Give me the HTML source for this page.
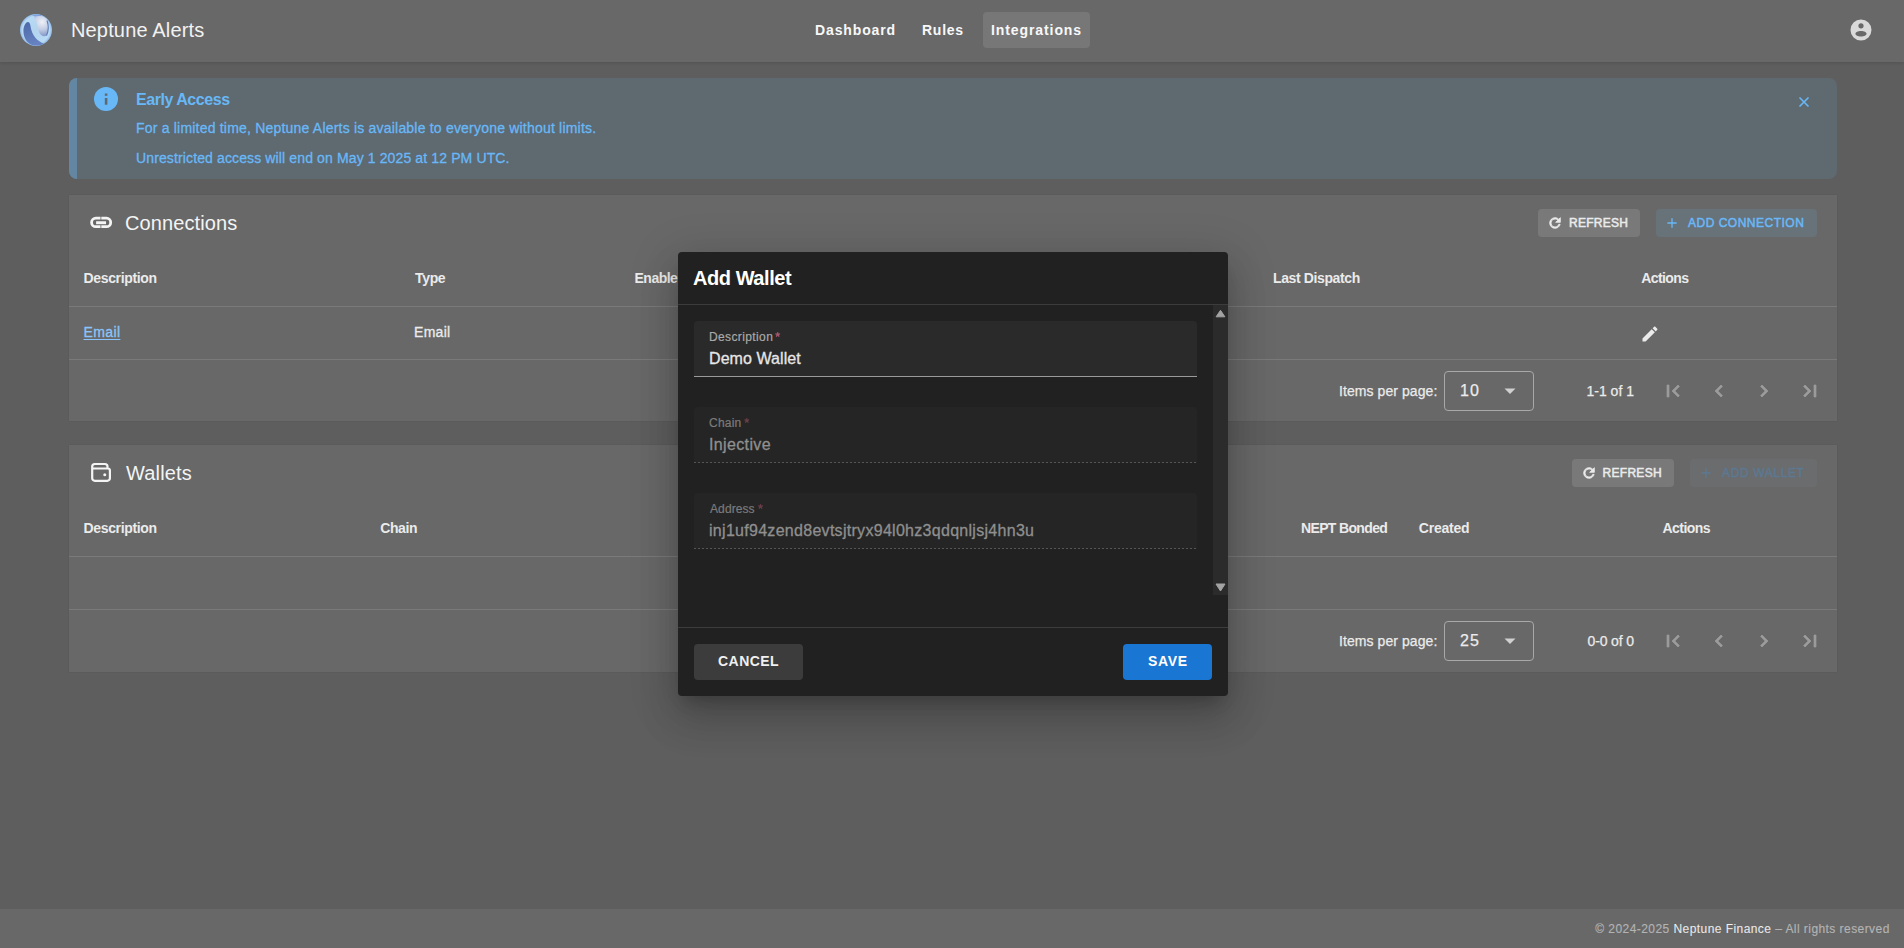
<!DOCTYPE html>
<html><head><meta charset="utf-8"><title>Neptune Alerts</title>
<style>
html,body{margin:0;padding:0;}
body{width:1904px;height:948px;overflow:hidden;position:relative;background:#5e5e5e;font-family:"Liberation Sans", sans-serif;}
</style></head><body>
<div style="position:absolute;left:0px;top:0px;width:1904px;height:62px;background:#686868;box-shadow:0 1px 3px rgba(0,0,0,.08),0 2px 2px rgba(0,0,0,.03);"></div>
<svg style="position:absolute;left:20px;top:14px" width="32" height="32" viewBox="0 0 32 32">
<defs>
<radialGradient id="hl" cx="22" cy="8" r="15" gradientUnits="userSpaceOnUse"><stop offset="0" stop-color="#eef0f6"/><stop offset="0.5" stop-color="#c3cde4"/><stop offset="1" stop-color="#7f92c4"/></radialGradient>
<linearGradient id="dk" x1="0" y1="0" x2="0.3" y2="1"><stop offset="0" stop-color="#4d68a8"/><stop offset="1" stop-color="#6682c0"/></linearGradient>
<radialGradient id="sp" cx="16" cy="16" r="16" gradientUnits="userSpaceOnUse"><stop offset="0" stop-color="#b3d3ef"/><stop offset="0.85" stop-color="#b8daf4"/><stop offset="1" stop-color="#8fb8e6"/></radialGradient>
</defs>
<circle cx="16" cy="16" r="16" fill="url(#sp)"/>
<path d="M12 1.2C15 0.3 19 0.3 22 1.5L17 3.5Z" fill="#7fa2dc"/>
<path d="M6 9C8 7 10 8 10.5 12C11 16.5 13 21 16 24.5C18.5 27 21 28.5 24 29.8C20 32 14 32.2 10 30C5 27 3 21 3.5 15C4 12 5 10 6 9Z" fill="url(#dk)"/>
<path d="M14 3C19 1.2 24.5 2 27.5 6C28.8 10 28.8 17 26.5 21.5C24 23 21 22 19.5 19C18 15.5 17.5 9 14 3Z" fill="url(#hl)"/>
<path d="M27 6.5C28.6 11 28.6 17 26.5 21.5" fill="none" stroke="#5b7bb8" stroke-width="1.1"/>
</svg>
<div style="position:absolute;left:71.00px;top:20.00px;font-size:20px;line-height:20px;font-weight:400;letter-spacing:0.154px;color:#f2f2f2;white-space:nowrap;">Neptune Alerts</div>
<div style="position:absolute;left:983px;top:12px;width:107px;height:36px;background:#777777;border-radius:4px;"></div>
<div style="position:absolute;left:815.00px;top:23.00px;font-size:14px;line-height:14px;font-weight:700;letter-spacing:0.875px;color:#f8f8f8;white-space:nowrap;">Dashboard</div>
<div style="position:absolute;left:922.00px;top:23.00px;font-size:14px;line-height:14px;font-weight:700;letter-spacing:0.750px;color:#f8f8f8;white-space:nowrap;">Rules</div>
<div style="position:absolute;left:991.00px;top:23.00px;font-size:14px;line-height:14px;font-weight:700;letter-spacing:0.909px;color:#f8f8f8;white-space:nowrap;">Integrations</div>
<svg style="position:absolute;left:1849px;top:18px" width="24" height="24" viewBox="0 0 24 24">
<path fill="#d9d9d9" fill-rule="evenodd" d="M12 1.5A10.5 10.5 0 1 1 12 22.5A10.5 10.5 0 1 1 12 1.5Z M12 5.2A2.6 2.6 0 1 0 12 10.4A2.6 2.6 0 1 0 12 5.2Z M12 13C8.9 13 6.4 14.2 6.4 15.7C6.4 17.2 8.9 18.4 12 18.4C15.1 18.4 17.6 17.2 17.6 15.7C17.6 14.2 15.1 13 12 13Z"/>
</svg>
<div style="position:absolute;left:69px;top:78px;width:1768px;height:101px;background:rgb(95,105,112);border-radius:8px;"></div>
<div style="position:absolute;left:69px;top:78px;width:8px;height:101px;background:rgb(99,135,163);border-radius:8px 0 0 8px;"></div>
<svg style="position:absolute;left:94.2px;top:87.3px" width="24" height="24" viewBox="0 0 24 24">
<circle cx="12" cy="12" r="12" fill="rgb(104,184,247)"/>
<rect x="10.8" y="11" width="2.6" height="6.7" fill="rgb(95,105,112)"/>
<rect x="10.8" y="6.5" width="2.6" height="2.3" fill="rgb(95,105,112)"/>
</svg>
<div style="position:absolute;left:136.00px;top:92.00px;font-size:16px;line-height:16px;font-weight:700;letter-spacing:-0.455px;color:rgb(104,184,247);white-space:nowrap;">Early Access</div>
<div style="position:absolute;left:136.00px;top:121.00px;font-size:14px;line-height:14px;font-weight:400;letter-spacing:0.203px;color:rgb(104,184,247);white-space:nowrap;-webkit-text-stroke:0.3px rgb(104,184,247);">For a limited time, Neptune Alerts is available to everyone without limits.</div>
<div style="position:absolute;left:136.00px;top:151.00px;font-size:14px;line-height:14px;font-weight:400;letter-spacing:0.127px;color:rgb(104,184,247);white-space:nowrap;-webkit-text-stroke:0.3px rgb(104,184,247);">Unrestricted access will end on May 1 2025 at 12 PM UTC.</div>
<svg style="position:absolute;left:1798px;top:96px" width="12" height="12" viewBox="0 0 12 12">
<path d="M1.5 1.5L10.5 10.5M10.5 1.5L1.5 10.5" stroke="rgb(104,184,247)" stroke-width="1.6"/>
</svg>
<div style="position:absolute;left:69px;top:195px;width:1768px;height:226px;background:#686868;box-shadow:0 0 1px rgba(0,0,0,.2);"></div>
<svg style="position:absolute;left:89px;top:211px" width="24" height="24" viewBox="0 0 24 24">
<path fill="none" stroke="#f4f4f4" stroke-width="2.8" d="M11.5 7.15H6.85A4.25 4.25 0 0 0 6.85 15.65H11.5 M12.3 7.15H17.45A4.25 4.25 0 0 1 17.45 15.65H12.3"/>
<rect x="7.1" y="10.25" width="9.95" height="2.95" fill="#f4f4f4"/>
</svg>
<div style="position:absolute;left:125.00px;top:213.00px;font-size:20px;line-height:20px;font-weight:400;letter-spacing:0.100px;color:#f4f4f4;white-space:nowrap;">Connections</div>
<div style="position:absolute;left:1538px;top:209px;width:102px;height:28px;background:#797979;border-radius:4px;"></div>
<svg style="position:absolute;left:1546.5px;top:215px" width="16" height="16" viewBox="0 0 24 24"><path fill="#ebebeb" stroke="#ebebeb" stroke-width="1.2" d="M17.65,6.35C16.2,4.9 14.21,4 12,4A8,8 0 0,0 4,12A8,8 0 0,0 12,20C15.73,20 18.84,17.45 19.73,14H17.65C16.83,16.33 14.61,18 12,18A6,6 0 0,1 6,12A6,6 0 0,1 12,6C13.66,6 15.14,6.69 16.22,7.78L13,11H20V4L17.65,6.35Z"/></svg>
<div style="position:absolute;left:1569.00px;top:217.00px;font-size:12px;line-height:12px;font-weight:400;letter-spacing:0.250px;color:#ebebeb;white-space:nowrap;-webkit-text-stroke:0.5px #ebebeb;">REFRESH</div>
<div style="position:absolute;left:1656px;top:209px;width:161px;height:28px;background:rgb(104,114,121);border-radius:4px;"></div>
<svg style="position:absolute;left:1664px;top:215px" width="16" height="16" viewBox="0 0 24 24"><path fill="rgb(104,184,247)" d="M19,13H13V19H11V13H5V11H11V5H13V11H19V13Z"/></svg>
<div style="position:absolute;left:1688.00px;top:217.00px;font-size:12px;line-height:12px;font-weight:400;letter-spacing:0.500px;color:rgb(104,184,247);white-space:nowrap;-webkit-text-stroke:0.5px rgb(104,184,247);">ADD CONNECTION</div>
<div style="position:absolute;left:83.50px;top:271.00px;font-size:14px;line-height:14px;font-weight:700;letter-spacing:-0.350px;color:#ebebeb;white-space:nowrap;">Description</div>
<div style="position:absolute;left:415.00px;top:271.00px;font-size:14px;line-height:14px;font-weight:700;letter-spacing:-0.333px;color:#ebebeb;white-space:nowrap;">Type</div>
<div style="position:absolute;left:1273.00px;top:271.00px;font-size:14px;line-height:14px;font-weight:700;letter-spacing:-0.383px;color:#ebebeb;white-space:nowrap;">Last Dispatch</div>
<div style="position:absolute;left:1641.30px;top:271.00px;font-size:14px;line-height:14px;font-weight:700;letter-spacing:-0.600px;color:#ebebeb;white-space:nowrap;">Actions</div>
<div style="position:absolute;left:634.50px;top:271.00px;font-size:14px;line-height:14px;font-weight:700;letter-spacing:-0.500px;color:#ebebeb;white-space:nowrap;">Enable</div>
<div style="position:absolute;left:69px;top:306px;width:1768px;height:1px;background:#7a7a7a;"></div>
<div style="position:absolute;left:83.50px;top:325.00px;font-size:14px;line-height:14px;font-weight:400;letter-spacing:0.375px;color:rgb(138,196,250);white-space:nowrap;text-decoration:underline;text-underline-offset:2px;text-decoration-thickness:1.2px;-webkit-text-stroke:0.3px rgb(138,196,250);">Email</div>
<div style="position:absolute;left:414.00px;top:325.00px;font-size:14px;line-height:14px;font-weight:400;letter-spacing:0.300px;color:#ebebeb;white-space:nowrap;-webkit-text-stroke:0.3px #ebebeb;">Email</div>
<svg style="position:absolute;left:1640px;top:323.5px" width="20" height="20" viewBox="0 0 24 24"><path fill="#ebebeb" d="M20.71,7.04C21.1,6.65 21.1,6 20.71,5.63L18.37,3.29C18,2.9 17.35,2.9 16.96,3.29L15.12,5.12L18.87,8.87M3,17.25V21H6.75L17.81,9.93L14.06,6.18L3,17.25Z"/></svg>
<div style="position:absolute;left:69px;top:359px;width:1768px;height:1px;background:#7a7a7a;"></div>
<div style="position:absolute;left:1339.00px;top:384.00px;font-size:14px;line-height:14px;font-weight:400;letter-spacing:0.071px;color:#ebebeb;white-space:nowrap;-webkit-text-stroke:0.25px #ebebeb;">Items per page:</div>
<div style="position:absolute;left:1444px;top:371px;width:88px;height:38px;border:1px solid #a8a8a8;border-radius:4px;"></div>
<div style="position:absolute;left:1460.00px;top:383.00px;font-size:16px;line-height:16px;font-weight:400;letter-spacing:1.000px;color:#ebebeb;white-space:nowrap;-webkit-text-stroke:0.25px #ebebeb;">10</div>
<svg style="position:absolute;left:1504px;top:388px" width="12" height="7" viewBox="0 0 12 7"><path d="M0.5 0.5H11.5L6 6Z" fill="#d0d0d0"/></svg>
<div style="position:absolute;left:1586.50px;top:384.00px;font-size:14px;line-height:14px;font-weight:400;letter-spacing:0.000px;color:#ebebeb;white-space:nowrap;-webkit-text-stroke:0.25px #ebebeb;">1-1 of 1</div>
<svg style="position:absolute;left:1661px;top:379px" width="24" height="24" viewBox="0 0 24 24"><path fill="#9c9c9c" stroke="#9c9c9c" stroke-width="0.7" d="M18.41,16.59L13.82,12L18.41,7.41L17,6L11,12L17,18L18.41,16.59M6,6H8V18H6V6Z"/></svg>
<svg style="position:absolute;left:1707px;top:379px" width="24" height="24" viewBox="0 0 24 24"><path fill="#9c9c9c" stroke="#9c9c9c" stroke-width="0.7" d="M15.41,16.58L10.83,12L15.41,7.41L14,6L8,12L14,18L15.41,16.58Z"/></svg>
<svg style="position:absolute;left:1752px;top:379px" width="24" height="24" viewBox="0 0 24 24"><path fill="#9c9c9c" stroke="#9c9c9c" stroke-width="0.7" d="M8.59,16.58L13.17,12L8.59,7.41L10,6L16,12L10,18L8.59,16.58Z"/></svg>
<svg style="position:absolute;left:1798px;top:379px" width="24" height="24" viewBox="0 0 24 24"><path fill="#9c9c9c" stroke="#9c9c9c" stroke-width="0.7" d="M5.59,7.41L10.18,12L5.59,16.59L7,18L13,12L7,6L5.59,7.41M16,6H18V18H16V6Z"/></svg>
<div style="position:absolute;left:69px;top:445px;width:1768px;height:227px;background:#686868;box-shadow:0 0 1px rgba(0,0,0,.2);"></div>
<svg style="position:absolute;left:89px;top:461px" width="24" height="24" viewBox="0 0 24 24">
<path fill="none" stroke="#f4f4f4" stroke-width="2.2" stroke-linejoin="round" d="M18.5 7.5V5.6A2.6 2.6 0 0 0 15.9 3H5.8A2.6 2.6 0 0 0 3.2 5.6V17.2A2.6 2.6 0 0 0 5.8 19.8H18.3A2.6 2.6 0 0 0 20.9 17.2V9.5A2 2 0 0 0 18.9 7.5H3.2"/>
<circle cx="15.75" cy="13.75" r="1.5" fill="#f4f4f4"/>
</svg>
<div style="position:absolute;left:126.00px;top:463.00px;font-size:20px;line-height:20px;font-weight:400;letter-spacing:0.167px;color:#f4f4f4;white-space:nowrap;">Wallets</div>
<div style="position:absolute;left:1572px;top:459px;width:102px;height:28px;background:#797979;border-radius:4px;"></div>
<svg style="position:absolute;left:1580.5px;top:465px" width="16" height="16" viewBox="0 0 24 24"><path fill="#ebebeb" stroke="#ebebeb" stroke-width="1.2" d="M17.65,6.35C16.2,4.9 14.21,4 12,4A8,8 0 0,0 4,12A8,8 0 0,0 12,20C15.73,20 18.84,17.45 19.73,14H17.65C16.83,16.33 14.61,18 12,18A6,6 0 0,1 6,12A6,6 0 0,1 12,6C13.66,6 15.14,6.69 16.22,7.78L13,11H20V4L17.65,6.35Z"/></svg>
<div style="position:absolute;left:1602.50px;top:467.00px;font-size:12px;line-height:12px;font-weight:400;letter-spacing:0.300px;color:#ebebeb;white-space:nowrap;-webkit-text-stroke:0.5px #ebebeb;">REFRESH</div>
<div style="position:absolute;left:1690px;top:459px;width:127px;height:28px;background:#6a6c6e;border-radius:4px;"></div>
<svg style="position:absolute;left:1698px;top:465px" width="16" height="16" viewBox="0 0 24 24"><path fill="#5d7891" d="M19,13H13V19H11V13H5V11H11V5H13V11H19V13Z"/></svg>
<div style="position:absolute;left:1722.00px;top:467.00px;font-size:12px;line-height:12px;font-weight:400;letter-spacing:0.633px;color:#5d7891;white-space:nowrap;-webkit-text-stroke:0.5px #5d7891;">ADD WALLET</div>
<div style="position:absolute;left:83.50px;top:521.00px;font-size:14px;line-height:14px;font-weight:700;letter-spacing:-0.350px;color:#ebebeb;white-space:nowrap;">Description</div>
<div style="position:absolute;left:380.20px;top:521.00px;font-size:14px;line-height:14px;font-weight:700;letter-spacing:-0.400px;color:#ebebeb;white-space:nowrap;">Chain</div>
<div style="position:absolute;left:1301.00px;top:521.00px;font-size:14px;line-height:14px;font-weight:700;letter-spacing:-0.650px;color:#ebebeb;white-space:nowrap;">NEPT Bonded</div>
<div style="position:absolute;left:1418.80px;top:521.00px;font-size:14px;line-height:14px;font-weight:700;letter-spacing:-0.233px;color:#ebebeb;white-space:nowrap;">Created</div>
<div style="position:absolute;left:1662.50px;top:521.00px;font-size:14px;line-height:14px;font-weight:700;letter-spacing:-0.533px;color:#ebebeb;white-space:nowrap;">Actions</div>
<div style="position:absolute;left:69px;top:556px;width:1768px;height:1px;background:#7a7a7a;"></div>
<div style="position:absolute;left:69px;top:609px;width:1768px;height:1px;background:#7a7a7a;"></div>
<div style="position:absolute;left:1339.00px;top:634.00px;font-size:14px;line-height:14px;font-weight:400;letter-spacing:0.071px;color:#ebebeb;white-space:nowrap;-webkit-text-stroke:0.25px #ebebeb;">Items per page:</div>
<div style="position:absolute;left:1444px;top:621px;width:88px;height:38px;border:1px solid #a8a8a8;border-radius:4px;"></div>
<div style="position:absolute;left:1460.00px;top:633.00px;font-size:16px;line-height:16px;font-weight:400;letter-spacing:1.000px;color:#ebebeb;white-space:nowrap;-webkit-text-stroke:0.25px #ebebeb;">25</div>
<svg style="position:absolute;left:1504px;top:638px" width="12" height="7" viewBox="0 0 12 7"><path d="M0.5 0.5H11.5L6 6Z" fill="#d0d0d0"/></svg>
<div style="position:absolute;left:1587.50px;top:634.00px;font-size:14px;line-height:14px;font-weight:400;letter-spacing:-0.143px;color:#ebebeb;white-space:nowrap;-webkit-text-stroke:0.25px #ebebeb;">0-0 of 0</div>
<svg style="position:absolute;left:1661px;top:629px" width="24" height="24" viewBox="0 0 24 24"><path fill="#9c9c9c" stroke="#9c9c9c" stroke-width="0.7" d="M18.41,16.59L13.82,12L18.41,7.41L17,6L11,12L17,18L18.41,16.59M6,6H8V18H6V6Z"/></svg>
<svg style="position:absolute;left:1707px;top:629px" width="24" height="24" viewBox="0 0 24 24"><path fill="#9c9c9c" stroke="#9c9c9c" stroke-width="0.7" d="M15.41,16.58L10.83,12L15.41,7.41L14,6L8,12L14,18L15.41,16.58Z"/></svg>
<svg style="position:absolute;left:1752px;top:629px" width="24" height="24" viewBox="0 0 24 24"><path fill="#9c9c9c" stroke="#9c9c9c" stroke-width="0.7" d="M8.59,16.58L13.17,12L8.59,7.41L10,6L16,12L10,18L8.59,16.58Z"/></svg>
<svg style="position:absolute;left:1798px;top:629px" width="24" height="24" viewBox="0 0 24 24"><path fill="#9c9c9c" stroke="#9c9c9c" stroke-width="0.7" d="M5.59,7.41L10.18,12L5.59,16.59L7,18L13,12L7,6L5.59,7.41M16,6H18V18H16V6Z"/></svg>
<div style="position:absolute;left:0px;top:909px;width:1904px;height:39px;background:#686868;"></div>
<div style="position:absolute;left:1595.30px;top:923.00px;font-size:12px;line-height:12px;font-weight:400;letter-spacing:0.438px;color:#b3b3b3;white-space:nowrap;-webkit-text-stroke:0.15px #b3b3b3;">© 2024-2025 <span style="color:#f4f4f4">Neptune Finance</span> – All rights reserved</div>
<div style="position:absolute;left:678px;top:252px;width:550px;height:444px;background:#212121;border-radius:4px;box-shadow:0 11px 15px -7px rgba(0,0,0,.2),0 24px 38px 3px rgba(0,0,0,.14),0 9px 46px 8px rgba(0,0,0,.12);"></div>
<div style="position:absolute;left:693.00px;top:268.00px;font-size:20px;line-height:20px;font-weight:700;letter-spacing:-0.444px;color:#ffffff;white-space:nowrap;">Add Wallet</div>
<div style="position:absolute;left:678px;top:304px;width:550px;height:1px;background:#3c3c3c;"></div>
<div style="position:absolute;left:1213px;top:305px;width:15px;height:290px;background:#2b2b2b;"></div>
<svg style="position:absolute;left:1215px;top:308.6px" width="11" height="9" viewBox="0 0 11 9"><path d="M5.5 1.3L9.9 7.8H1.1Z" fill="#a3a3a3" stroke="#a3a3a3" stroke-width="1" stroke-linejoin="round"/></svg>
<svg style="position:absolute;left:1215px;top:583px" width="11" height="9" viewBox="0 0 11 9"><path d="M1 1H10L5.5 8Z" fill="#a3a3a3" stroke="#a3a3a3" stroke-width="1" stroke-linejoin="round"/></svg>
<div style="position:absolute;left:694px;top:321px;width:503px;height:56px;background:#2a2a2a;border-radius:4px 4px 0 0;"></div>
<div style="position:absolute;left:694px;top:376px;width:503px;height:1px;background:#9a9a9a;"></div>
<div style="position:absolute;left:709.00px;top:331.00px;font-size:12px;line-height:12px;font-weight:400;letter-spacing:0.380px;color:#a9a9a9;white-space:nowrap;-webkit-text-stroke:0.2px #a9a9a9;">Description</div>
<svg style="position:absolute;left:0;top:0;overflow:visible" width="1" height="1"><path d="M777.70 334.60L777.70 332.60M777.70 334.60L779.60 333.98M777.70 334.60L778.88 336.22M777.70 334.60L776.52 336.22M777.70 334.60L775.80 333.98" stroke="#a8566c" stroke-width="1.3" stroke-linecap="round" fill="none"/></svg>
<div style="position:absolute;left:709.00px;top:351.00px;font-size:16px;line-height:16px;font-weight:400;letter-spacing:0.080px;color:#e6e6e6;white-space:nowrap;-webkit-text-stroke:0.3px #e6e6e6;">Demo Wallet</div>
<div style="position:absolute;left:694px;top:407px;width:503px;height:56px;background:#252525;border-radius:4px 4px 0 0;"></div>
<div style="position:absolute;left:694px;top:462px;width:503px;height:1px;background:repeating-linear-gradient(90deg,#555 0 2px,transparent 2px 4px);"></div>
<div style="position:absolute;left:709.00px;top:417.00px;font-size:12px;line-height:12px;font-weight:400;letter-spacing:0.225px;color:#7b7b7b;white-space:nowrap;-webkit-text-stroke:0.2px #7b7b7b;">Chain</div>
<svg style="position:absolute;left:0;top:0;overflow:visible" width="1" height="1"><path d="M746.80 420.60L746.80 418.60M746.80 420.60L748.70 419.98M746.80 420.60L747.98 422.22M746.80 420.60L745.62 422.22M746.80 420.60L744.90 419.98" stroke="#6a3d48" stroke-width="1.3" stroke-linecap="round" fill="none"/></svg>
<div style="position:absolute;left:709.00px;top:437.00px;font-size:16px;line-height:16px;font-weight:400;letter-spacing:0.362px;color:#8f8f8f;white-space:nowrap;-webkit-text-stroke:0.3px #8f8f8f;">Injective</div>
<div style="position:absolute;left:694px;top:493px;width:503px;height:56px;background:#252525;border-radius:4px 4px 0 0;"></div>
<div style="position:absolute;left:694px;top:548px;width:503px;height:1px;background:repeating-linear-gradient(90deg,#555 0 2px,transparent 2px 4px);"></div>
<div style="position:absolute;left:710.00px;top:503.00px;font-size:12px;line-height:12px;font-weight:400;letter-spacing:0.100px;color:#7b7b7b;white-space:nowrap;-webkit-text-stroke:0.2px #7b7b7b;">Address</div>
<svg style="position:absolute;left:0;top:0;overflow:visible" width="1" height="1"><path d="M760.50 506.60L760.50 504.60M760.50 506.60L762.40 505.98M760.50 506.60L761.68 508.22M760.50 506.60L759.32 508.22M760.50 506.60L758.60 505.98" stroke="#6a3d48" stroke-width="1.3" stroke-linecap="round" fill="none"/></svg>
<div style="position:absolute;left:709.00px;top:523.00px;font-size:16px;line-height:16px;font-weight:400;letter-spacing:0.290px;color:#8f8f8f;white-space:nowrap;-webkit-text-stroke:0.3px #8f8f8f;">inj1uf94zend8evtsjtryx94l0hz3qdqnljsj4hn3u</div>
<div style="position:absolute;left:678px;top:627px;width:550px;height:1px;background:#3c3c3c;"></div>
<div style="position:absolute;left:694px;top:644px;width:109px;height:36px;background:#3c3c3c;border-radius:4px;"></div>
<div style="position:absolute;left:718.00px;top:654.00px;font-size:14px;line-height:14px;font-weight:700;letter-spacing:0.460px;color:#f0f0f0;white-space:nowrap;">CANCEL</div>
<div style="position:absolute;left:1123px;top:644px;width:89px;height:36px;background:#1976d2;border-radius:4px;"></div>
<div style="position:absolute;left:1148.00px;top:654.00px;font-size:14px;line-height:14px;font-weight:700;letter-spacing:0.667px;color:#ffffff;white-space:nowrap;">SAVE</div>
</body></html>
